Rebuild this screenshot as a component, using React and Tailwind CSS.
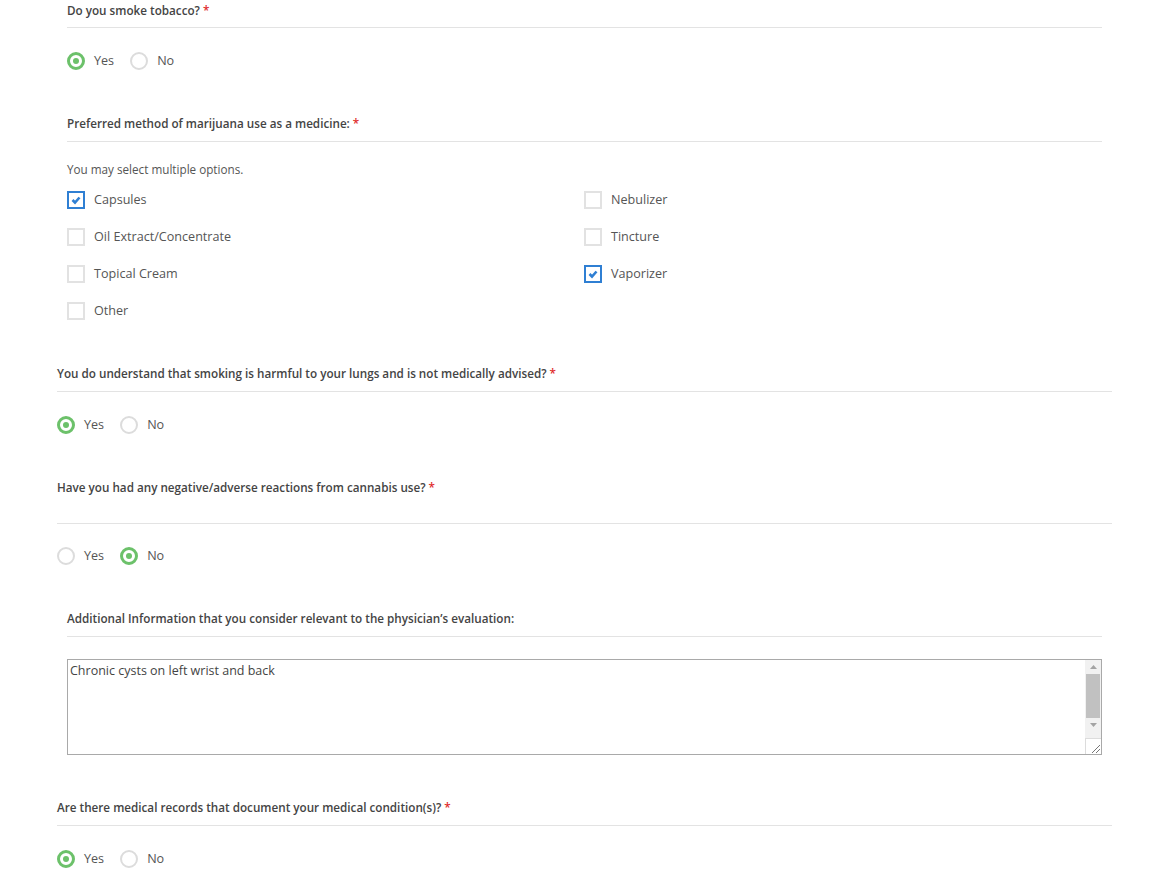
import React, { useState } from "react";

const font = { fontFamily: '"Open Sans", "Liberation Sans", sans-serif' };

const Label = ({ children, required, className = "" }) => (
  <div className={`text-[11.7px] leading-[20px] font-semibold text-[#444] ${className}`}>
    {children}
    {required && <span className="text-[#e02b2b] ml-[3px]">*</span>}
  </div>
);

const Radio = ({ checked, label, onClick }) => (
  <button onClick={onClick} className="flex items-center gap-[9px] h-[20px]">
    {checked ? (
      <span className="w-[18px] h-[18px] rounded-full border-[3px] border-[#6cc16a] flex items-center justify-center">
        <span className="w-[6px] h-[6px] rounded-full bg-[#6cc16a]" />
      </span>
    ) : (
      <span className="w-[18px] h-[18px] rounded-full border-2 border-[#dcdcdc]" />
    )}
    <span className="text-[12.6px] text-[#555]">{label}</span>
  </button>
);

const YesNo = ({ value, onChange }) => (
  <div className="flex items-center gap-[16px]">
    <Radio checked={value === "yes"} label="Yes" onClick={() => onChange("yes")} />
    <Radio checked={value === "no"} label="No" onClick={() => onChange("no")} />
  </div>
);

const Checkbox = ({ checked, label, onClick }) => (
  <button onClick={onClick} className="flex items-center gap-[9px] h-[20px]">
    {checked ? (
      <span className="w-[18px] h-[18px] border-2 border-[#2f7fd3] bg-white flex items-center justify-center">
        <svg width="10" height="10" viewBox="0 0 10 10">
          <polyline points="1.5,5 4,7.5 8.5,2.5" fill="none" stroke="#2f7fd3" strokeWidth="2.6" />
        </svg>
      </span>
    ) : (
      <span className="w-[18px] h-[18px] border-2 border-[#e2e2e2] bg-white" />
    )}
    <span className="text-[12.6px] text-[#555]">{label}</span>
  </button>
);

export default function App() {
  const [tobacco, setTobacco] = useState("yes");
  const [harmful, setHarmful] = useState("yes");
  const [reactions, setReactions] = useState("no");
  const [records, setRecords] = useState("yes");
  const [methods, setMethods] = useState(["Capsules", "Vaporizer"]);
  const [info, setInfo] = useState("Chronic cysts on left wrist and back");

  const toggle = (m) =>
    setMethods((prev) => (prev.includes(m) ? prev.filter((x) => x !== m) : [...prev, m]));

  const left = ["Capsules", "Oil Extract/Concentrate", "Topical Cream", "Other"];
  const right = ["Nebulizer", "Tincture", "Vaporizer"];

  return (
    <div className="min-h-screen w-full bg-white" style={font}>
      {/* tobacco */}
      <div className="pl-[67px] w-[1102px]">
        <Label required className="pb-[7px] border-b border-[#e3e3e3]">Do you smoke tobacco?</Label>
        <div className="pt-[23px]">
          <YesNo value={tobacco} onChange={setTobacco} />
        </div>
      </div>

      {/* method */}
      <div className="pl-[67px] w-[1102px] mt-[42px]">
        <Label required className="pb-[8px] border-b border-[#e3e3e3]">
          Preferred method of marijuana use as a medicine:
        </Label>
        <div className="mt-[17px] text-[11.7px] leading-[20px] text-[#555]">You may select multiple options.</div>
        <div className="mt-[11px] flex">
          <div className="w-[517px] flex flex-col gap-[17px]">
            {left.map((m) => (
              <Checkbox key={m} label={m} checked={methods.includes(m)} onClick={() => toggle(m)} />
            ))}
          </div>
          <div className="flex flex-col gap-[17px]">
            {right.map((m) => (
              <Checkbox key={m} label={m} checked={methods.includes(m)} onClick={() => toggle(m)} />
            ))}
          </div>
        </div>
      </div>

      {/* harmful */}
      <div className="pl-[57px] w-[1112px] mt-[42px]">
        <Label required className="pb-[8px] border-b border-[#e3e3e3]">
          You do understand that smoking is harmful to your lungs and is not medically advised?
        </Label>
        <div className="pt-[23px]">
          <YesNo value={harmful} onChange={setHarmful} />
        </div>
      </div>

      {/* reactions */}
      <div className="pl-[57px] w-[1112px] mt-[42px]">
        <Label required className="pb-[26px] border-b border-[#e3e3e3]">
          Have you had any negative/adverse reactions from cannabis use?
        </Label>
        <div className="pt-[22px]">
          <YesNo value={reactions} onChange={setReactions} />
        </div>
      </div>

      {/* additional info */}
      <div className="pl-[67px] w-[1102px] mt-[42px]">
        <Label className="pb-[8px] border-b border-[#e3e3e3]">
          Additional Information that you consider relevant to the physician’s evaluation:
        </Label>
        <div className="mt-[22px] h-[96px] border border-[#a9a9a9] flex">
          <textarea
            value={info}
            onChange={(e) => setInfo(e.target.value)}
            className="flex-1 resize-none outline-none px-[2px] py-[2px] text-[12.5px] leading-[18px] text-[#444]"
            style={font}
          />
          <div className="w-[16px] flex flex-col bg-[#f1f1f1]">
            <div className="h-[14px] flex items-center justify-center">
              <svg width="7" height="4" viewBox="0 0 7 4"><polygon points="0,4 3.5,0 7,4" fill="#a3a3a3" /></svg>
            </div>
            <div className="h-[44px] mx-[1px] bg-[#c1c1c1]" />
            <div className="h-[14px] flex items-center justify-center">
              <svg width="7" height="4" viewBox="0 0 7 4"><polygon points="0,0 3.5,4 7,0" fill="#a3a3a3" /></svg>
            </div>
            <div className="flex-1" />
            <div className="h-[16px] bg-white border-l border-t border-[#dcdcdc] flex items-end justify-end">
              <svg width="12" height="12" viewBox="0 0 12 12">
                <line x1="3" y1="11" x2="11" y2="3" stroke="#777" strokeWidth="1" />
                <line x1="7" y1="11" x2="11" y2="7" stroke="#777" strokeWidth="1" />
              </svg>
            </div>
          </div>
        </div>
      </div>

      {/* records */}
      <div className="pl-[57px] w-[1112px] mt-[42px] pb-[20px]">
        <Label required className="pb-[8px] border-b border-[#e3e3e3]">
          Are there medical records that document your medical condition(s)?
        </Label>
        <div className="pt-[23px]">
          <YesNo value={records} onChange={setRecords} />
        </div>
      </div>
    </div>
  );
}
